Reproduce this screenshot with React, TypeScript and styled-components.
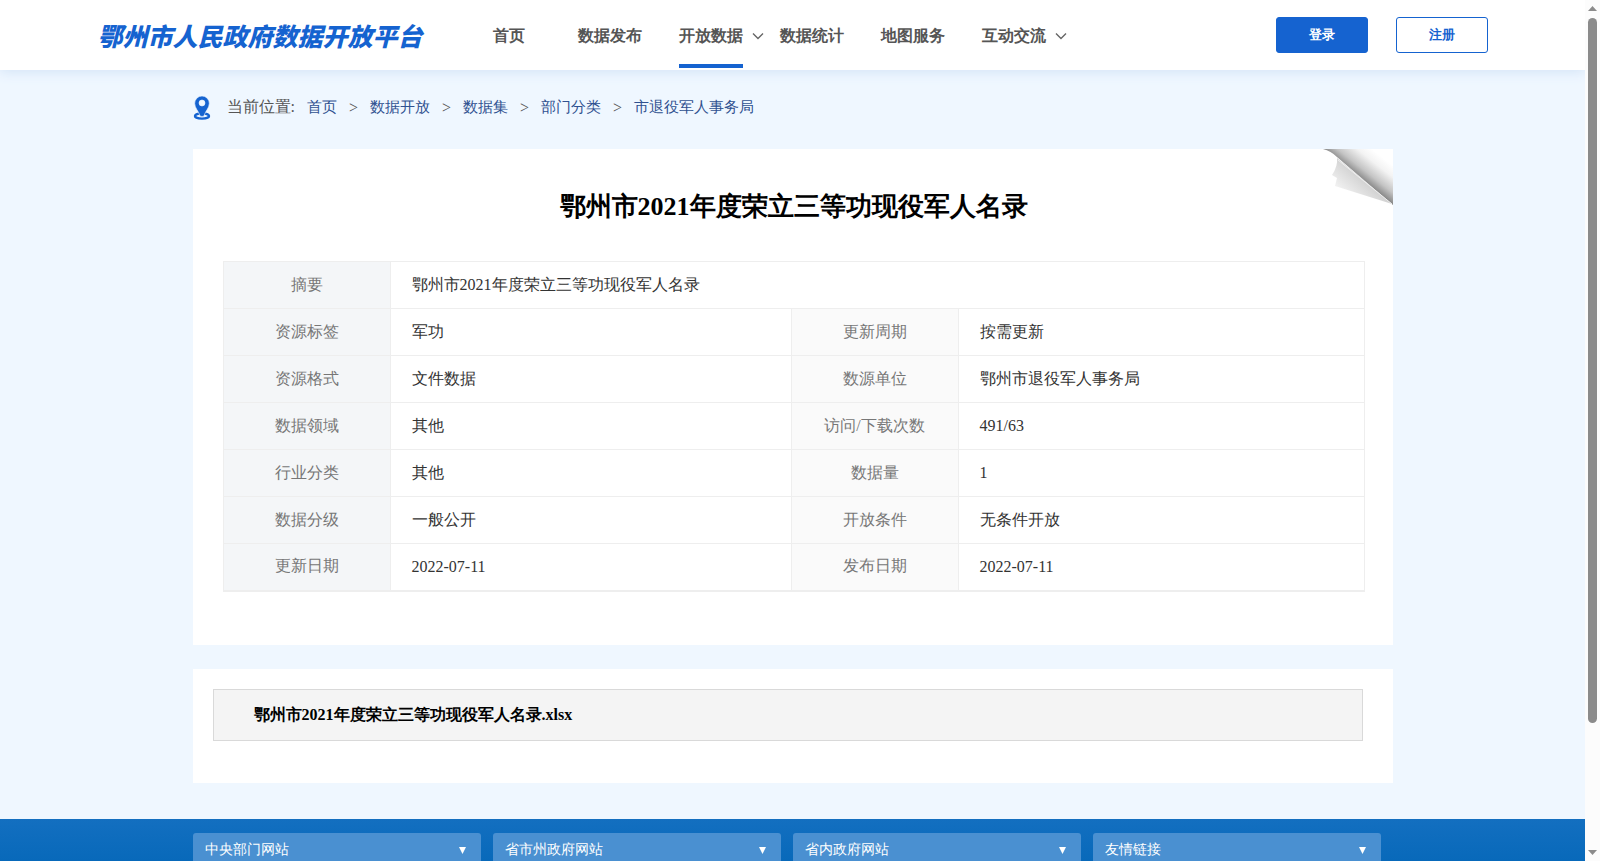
import React from "react";
import styled, { createGlobalStyle } from "styled-components";

const GlobalStyle = createGlobalStyle`
  *, *::before, *::after { box-sizing: border-box; }
  body {
    margin: 0;
    background: #eff7ff;
    color: #333;
    font-family: "Liberation Serif", serif;
    font-size: 16px;
  }
  a { color: inherit; text-decoration: none; }
`;

const Shell = styled.div`
  display: flex;
  height: 100vh;
`;

const Page = styled.div`
  flex: 1;
  min-width: 0;
  overflow-y: auto;
  scrollbar-width: none;
`;

const Header = styled.header`
  background: #fff;
  box-shadow: 0 2px 12px #d3e3f6;
`;

const HeaderInner = styled.div`
  display: flex;
  align-items: center;
  max-width: 1390px;
  height: 70px;
  margin: 0 auto;
`;

const Logo = styled.a`
  width: 361px;
  color: #1563d0;
  font-family: "Noto Sans CJK SC", sans-serif;
  font-size: 25px;
  font-style: italic;
  font-weight: 900;
  line-height: 36px;
  white-space: nowrap;
`;

const Nav = styled.nav`
  display: flex;
  flex: 1;
`;

const NavItem = styled.div`
  position: relative;
  display: flex;
  justify-content: center;
  width: 101px;
`;

const NavLink = styled.a<{ $active?: boolean }>`
  height: 66px;
  border-bottom: 4px solid ${(p) => (p.$active ? "#1563d0" : "transparent")};
  color: #555;
  font-weight: bold;
  line-height: 68px;
`;

const NavChevron = styled.svg`
  position: absolute;
  top: 30px;
  right: -2px;
  width: 12px;
  height: 8px;
`;

const Actions = styled.div`
  display: flex;
  gap: 28px;
`;

const ActionButton = styled.button<{ $primary?: boolean }>`
  width: 92px;
  height: 36px;
  padding: 0;
  border: 1px solid #1563d0;
  border-radius: 3px;
  background: ${(p) => (p.$primary ? "#1563d0" : "#fff")};
  color: ${(p) => (p.$primary ? "#fff" : "#1563d0")};
  font-family: inherit;
  font-size: 13px;
  font-weight: bold;
`;

const Content = styled.div`
  max-width: 1200px;
  margin: 0 auto;
`;

const Breadcrumb = styled.nav`
  display: flex;
  align-items: center;
  gap: 12px;
  height: 75px;
  margin-bottom: 4px;
  color: #555;
`;

const PinIcon = styled.svg`
  width: 18px;
  height: 24px;
  margin-right: 4px;
`;

const Crumb = styled.a`
  color: #2f5190;
  font-size: 15px;
`;

const Card = styled.section`
  position: relative;
  margin-bottom: 24px;
  background: #fff;
`;

const DetailCard = styled(Card)`
  padding: 38px 28px 53px 30px;
`;

const FileCard = styled(Card)`
  margin-bottom: 36px;
  padding: 20px 30px 42px 20px;
`;

const Fold = styled.svg`
  position: absolute;
  top: 0;
  right: 0;
  width: 70px;
  height: 56px;
`;

const Title = styled.h1`
  margin: 0 0 34px;
  color: #000;
  font-size: 26px;
  line-height: 40px;
  text-align: center;
`;

const DetailTable = styled.table`
  width: 100%;
  border-collapse: collapse;
  border-bottom: 2px solid #eee;
  table-layout: fixed;
`;

const LabelCol = styled.col`
  width: 167px;
`;

const ValueCol = styled.col`
  width: 401px;
`;

const Label = styled.th<{ $light?: boolean }>`
  height: 47px;
  padding: 0;
  border: 1px solid #eee;
  background: ${(p) => (p.$light ? "#fafafa" : "#f4f6f8")};
  color: #777;
  font-weight: normal;
`;

const Value = styled.td`
  padding: 0 21px;
  border: 1px solid #eee;
`;

const FileLink = styled.a`
  display: block;
  padding: 0 40px;
  border: 1px solid #d9d9d9;
  background: #f4f4f4;
  color: #000;
  font-weight: bold;
  line-height: 50px;
`;

const Footer = styled.footer`
  padding: 14px 0 8px;
  background: linear-gradient(#136fc0, #0467b8);
`;

const LinkRow = styled(Content)`
  display: grid;
  grid-template-columns: repeat(4, 1fr);
  gap: 12px;
  padding-right: 12px;
`;

const SelectBox = styled.div`
  position: relative;
`;

const SiteSelect = styled.select`
  display: block;
  width: 100%;
  height: 34px;
  padding: 0 12px;
  border: 0;
  border-radius: 3px;
  appearance: none;
  background: #4a90d1;
  color: #fff;
  font-family: inherit;
  font-size: 14px;
`;

const SelectArrow = styled.svg`
  position: absolute;
  top: 14px;
  right: 15px;
  width: 7px;
  height: 7px;
  pointer-events: none;
`;

const ScrollTrack = styled.div`
  display: flex;
  flex-direction: column;
  align-items: center;
  width: 15px;
  padding: 6px 0;
  background: #fcfcfc;
`;

const ScrollThumb = styled.div`
  flex: 0 0 83%;
  width: 9px;
  margin: 7px 0 auto;
  border-radius: 5px;
  background: #8b8b8b;
`;

const ScrollArrow = styled.svg`
  flex: none;
  width: 9px;
  height: 5px;
  fill: #8b8b8b;
`;

const navItems = [
  { text: "首页" },
  { text: "数据发布" },
  { text: "开放数据", active: true, menu: true },
  { text: "数据统计" },
  { text: "地图服务" },
  { text: "互动交流", menu: true },
];

const crumbs = ["首页", "数据开放", "数据集", "部门分类", "市退役军人事务局"];

const title = "鄂州市2021年度荣立三等功现役军人名录";

const rows = [
  ["资源标签", "军功", "更新周期", "按需更新"],
  ["资源格式", "文件数据", "数源单位", "鄂州市退役军人事务局"],
  ["数据领域", "其他", "访问/下载次数", "491/63"],
  ["行业分类", "其他", "数据量", "1"],
  ["数据分级", "一般公开", "开放条件", "无条件开放"],
  ["更新日期", "2022-07-11", "发布日期", "2022-07-11"],
];

const siteGroups = ["中央部门网站", "省市州政府网站", "省内政府网站", "友情链接"];

export default function App() {
  return (
    <Shell>
      <GlobalStyle />
      <Page>
        <Header>
          <HeaderInner>
            <Logo href="#">鄂州市人民政府数据开放平台</Logo>
            <Nav>
              {navItems.map((item) => (
                <NavItem key={item.text}>
                  <NavLink href="#" $active={item.active}>{item.text}</NavLink>
                  {item.menu && (
                    <NavChevron viewBox="0 0 12 8" fill="none" stroke="#666" strokeWidth="1.4">
                      <path d="M1 1.5 6 6.5 11 1.5" />
                    </NavChevron>
                  )}
                </NavItem>
              ))}
            </Nav>
            <Actions>
              <ActionButton type="button" $primary>登录</ActionButton>
              <ActionButton type="button">注册</ActionButton>
            </Actions>
          </HeaderInner>
        </Header>

        <Content as="main">
          <Breadcrumb>
            <PinIcon viewBox="0 0 18 24">
              <ellipse cx="9" cy="20" rx="7" ry="2.600" fill="none" stroke="#1563d0" strokeWidth="2.400" />
              <path
                fill="#1563d0"
                stroke="#eff7ff"
                strokeWidth=".6"
                fillRule="evenodd"
                d="M9 0a7.300 7.300 0 0 0-7.300 7.300c0 5 4.300 8.200 5.300 12.700q2 1 4 0c1-4.500 5.300-7.700 5.300-12.700a7.300 7.300 0 0 0-7.300-7.300Zm0 4a3 3 0 1 1 0 6 3 3 0 0 1 0-6Z"
              />
            </PinIcon>
            <span>当前位置:</span>
            {crumbs.map((crumb, i) => (
              <React.Fragment key={crumb}>
                {i > 0 && <span>&gt;</span>}
                <Crumb href="#">{crumb}</Crumb>
              </React.Fragment>
            ))}
          </Breadcrumb>

          <DetailCard>
            <Fold viewBox="0 0 70 56">
              <defs>
                <linearGradient id="turn" gradientUnits="userSpaceOnUse" x1="35" y1="28" x2="54" y2="4">
                  <stop offset="0" stopColor="#858585" />
                  <stop offset=".3" stopColor="#c4c4c4" />
                  <stop offset=".7" stopColor="#f3f3f3" />
                  <stop offset="1" stopColor="#fff" />
                </linearGradient>
                <linearGradient id="shade" gradientUnits="userSpaceOnUse" x1="38" y1="28" x2="22" y2="46">
                  <stop offset="0" stopColor="#d2d2d2" />
                  <stop offset="1" stopColor="#f2f2f2" />
                </linearGradient>
              </defs>
              <path fill="url(#shade)" d="M14 9q1 8-5 17l5 3-2 8 57 18Z" />
              <path fill="url(#turn)" d="M0 0h70v56L14 8Q8 2 0 0Z" />
              <path fill="none" stroke="#eee" d="M15 11 69 55" />
            </Fold>
            <Title>{title}</Title>
            <DetailTable>
              <colgroup>
                <LabelCol />
                <ValueCol />
                <LabelCol />
                <col />
              </colgroup>
              <tbody>
                <tr>
                  <Label scope="row">摘要</Label>
                  <Value colSpan={3}>{title}</Value>
                </tr>
                {rows.map(([a, b, c, d]) => (
                  <tr key={a}>
                    <Label scope="row">{a}</Label>
                    <Value>{b}</Value>
                    <Label scope="row" $light>{c}</Label>
                    <Value>{d}</Value>
                  </tr>
                ))}
              </tbody>
            </DetailTable>
          </DetailCard>

          <FileCard>
            <FileLink href="#">{title}.xlsx</FileLink>
          </FileCard>
        </Content>

        <Footer>
          <LinkRow>
            {siteGroups.map((group) => (
              <SelectBox key={group}>
                <SiteSelect aria-label={group}>
                  <option>{group}</option>
                </SiteSelect>
                <SelectArrow viewBox="0 0 7 7">
                  <path fill="#fff" d="M0 0h7L3.500 7Z" />
                </SelectArrow>
              </SelectBox>
            ))}
          </LinkRow>
        </Footer>
      </Page>
      <ScrollTrack aria-hidden="true">
        <ScrollArrow viewBox="0 0 9 5"><path d="M0 5 4.500 0 9 5Z" /></ScrollArrow>
        <ScrollThumb />
        <ScrollArrow viewBox="0 0 9 5"><path d="M0 0h9L4.500 5Z" /></ScrollArrow>
      </ScrollTrack>
    </Shell>
  );
}
